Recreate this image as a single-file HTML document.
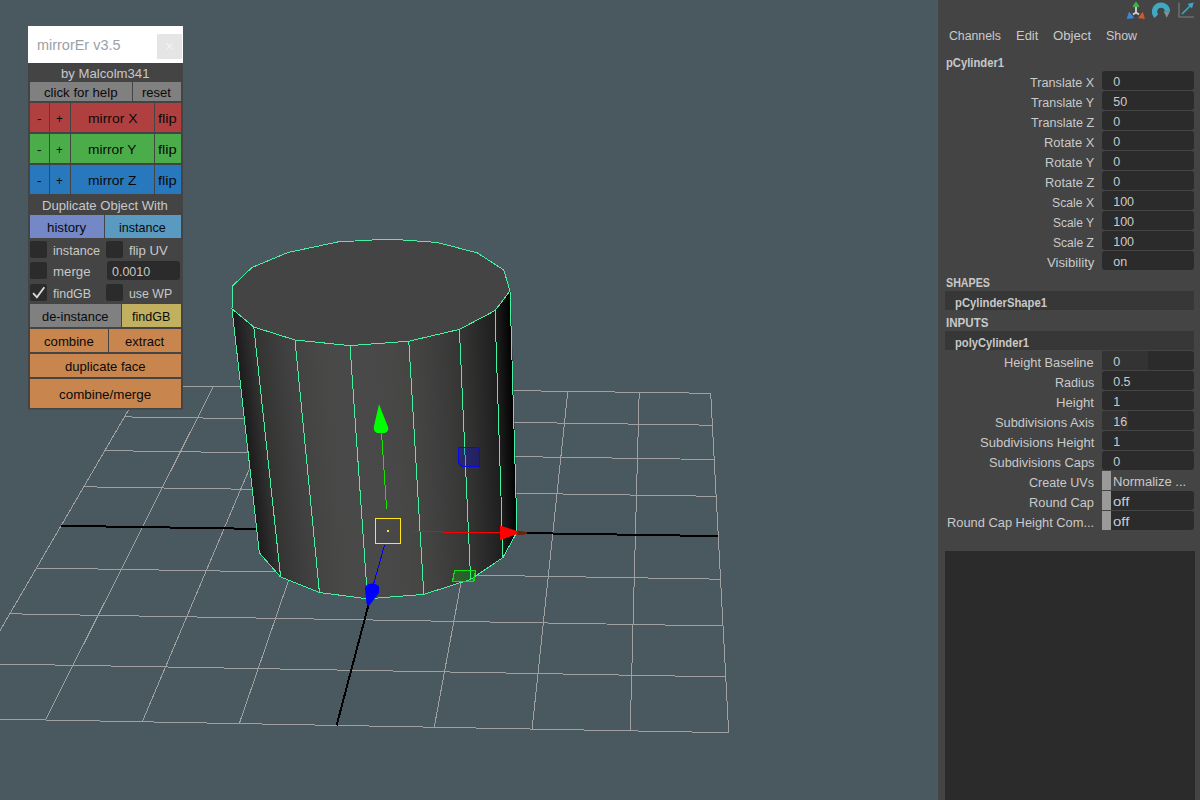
<!DOCTYPE html>
<html><head><meta charset="utf-8"><title>mirrorEr</title><style>
html,body{margin:0;padding:0}
body{width:1200px;height:800px;overflow:hidden;background:#4a5860;position:relative;font-family:"Liberation Sans",sans-serif;font-size:13px}
.a,.t{position:absolute;white-space:nowrap}
.t{line-height:20px;transform-origin:0 50%}
</style></head><body>
<svg id="vp" width="938" height="800" viewBox="0 0 938 800" style="position:absolute;left:0;top:0">
<path d="M142.7,385.6 L-51.0,718.2 M142.7,385.6 L710.7,393.3 M213.2,386.5 L45.5,720.0 M124.4,416.9 L712.4,425.2 M283.8,387.5 L142.3,721.8 M104.9,450.6 L714.2,459.5 M354.6,388.4 L239.3,723.6 M83.8,486.8 L716.2,496.3 M496.6,390.4 L434.2,727.2 M36.5,568.0 L720.5,579.2 M567.8,391.4 L532.1,729.1 M9.8,613.8 L723.0,626.0 M639.2,392.3 L630.2,730.9 M-19.2,663.7 L725.7,676.9 M710.7,393.3 L728.7,732.7 M-51.0,718.2 L728.7,732.7" stroke="#a0a0a0" stroke-width="1" fill="none" shape-rendering="crispEdges"/>
<path d="M61.1,525.8 L718.3,536.1" stroke="#000" stroke-width="2" fill="none" shape-rendering="crispEdges"/>
<path d="M425.5,389.4 L336.6,725.4" stroke="#000" stroke-width="2" fill="none" shape-rendering="crispEdges"/>
<defs><linearGradient id="f15" gradientUnits="userSpaceOnUse" x1="245.7" y1="430.9" x2="264.6" y2="428.8"><stop offset="0" stop-color="#1b1b1b"/><stop offset="0.25" stop-color="#212121"/><stop offset="0.5" stop-color="#272727"/><stop offset="0.75" stop-color="#2e2d2d"/><stop offset="1" stop-color="#333332"/></linearGradient><linearGradient id="f14" gradientUnits="userSpaceOnUse" x1="267.2" y1="452.0" x2="305.3" y2="448.1"><stop offset="0" stop-color="#333332"/><stop offset="0.25" stop-color="#383837"/><stop offset="0.5" stop-color="#3d3c3c"/><stop offset="0.75" stop-color="#414040"/><stop offset="1" stop-color="#444343"/></linearGradient><linearGradient id="f13" gradientUnits="userSpaceOnUse" x1="307.2" y1="466.2" x2="357.9" y2="462.0"><stop offset="0" stop-color="#444343"/><stop offset="0.25" stop-color="#464645"/><stop offset="0.5" stop-color="#484847"/><stop offset="0.75" stop-color="#4a4949"/><stop offset="1" stop-color="#4a4949"/></linearGradient><linearGradient id="f12" gradientUnits="userSpaceOnUse" x1="358.8" y1="472.2" x2="416.3" y2="468.5"><stop offset="0" stop-color="#4a4949"/><stop offset="0.25" stop-color="#4a4949"/><stop offset="0.5" stop-color="#494848"/><stop offset="0.75" stop-color="#474746"/><stop offset="1" stop-color="#454544"/></linearGradient><linearGradient id="f11" gradientUnits="userSpaceOnUse" x1="416.2" y1="467.8" x2="465.6" y2="465.3"><stop offset="0" stop-color="#454544"/><stop offset="0.25" stop-color="#424241"/><stop offset="0.5" stop-color="#3f3e3e"/><stop offset="0.75" stop-color="#3a3a39"/><stop offset="1" stop-color="#363535"/></linearGradient><linearGradient id="f10" gradientUnits="userSpaceOnUse" x1="465.0" y1="454.4" x2="499.7" y2="453.1"><stop offset="0" stop-color="#363535"/><stop offset="0.25" stop-color="#30302f"/><stop offset="0.5" stop-color="#2b2a2a"/><stop offset="0.75" stop-color="#242424"/><stop offset="1" stop-color="#1e1e1e"/></linearGradient><linearGradient id="f9" gradientUnits="userSpaceOnUse" x1="499.0" y1="434.1" x2="514.2" y2="433.6"><stop offset="0" stop-color="#1e1e1e"/><stop offset="0.25" stop-color="#171717"/><stop offset="0.5" stop-color="#101010"/><stop offset="0.75" stop-color="#090909"/><stop offset="1" stop-color="#020202"/></linearGradient></defs>
<polygon points="232.5,286.0 232.0,308.8 233.5,320.0" fill="#171717"/>
<polygon points="232.0,308.8 253.8,327.0 280.6,577.0 259.4,553.0" fill="url(#f15)" stroke="url(#f15)" stroke-width="0.6"/>
<polygon points="253.8,327.0 295.0,340.0 319.4,592.5 280.6,577.0" fill="url(#f14)" stroke="url(#f14)" stroke-width="0.6"/>
<polygon points="295.0,340.0 350.0,345.6 367.5,598.8 319.4,592.5" fill="url(#f13)" stroke="url(#f13)" stroke-width="0.6"/>
<polygon points="350.0,345.6 408.8,341.2 423.8,594.4 367.5,598.8" fill="url(#f12)" stroke="url(#f12)" stroke-width="0.6"/>
<polygon points="408.8,341.2 459.4,329.4 470.6,579.4 423.8,594.4" fill="url(#f11)" stroke="url(#f11)" stroke-width="0.6"/>
<polygon points="459.4,329.4 495.0,310.6 503.0,557.5 470.6,579.4" fill="url(#f10)" stroke="url(#f10)" stroke-width="0.6"/>
<polygon points="495.0,310.6 510.0,291.0 517.0,532.0 503.0,557.5" fill="url(#f9)" stroke="url(#f9)" stroke-width="0.6"/>
<polygon points="232.5,286.0 252.0,267.5 288.0,252.5 337.5,242.0 389.0,239.0 437.5,242.5 477.5,253.0 503.8,270.0 510.0,291.0 495.0,310.6 459.4,329.4 408.8,341.2 350.0,345.6 295.0,340.0 253.8,327.0 232.0,308.8" fill="#444444"/>
<path d="M232.5,286.0 L252.0,267.5 L288.0,252.5 L337.5,242.0 L389.0,239.0 L437.5,242.5 L477.5,253.0 L503.8,270.0 L510.0,291.0 L495.0,310.6 L459.4,329.4 L408.8,341.2 L350.0,345.6 L295.0,340.0 L253.8,327.0 L232.0,308.8 Z M510.0,291.0 L517.0,532.0 M495.0,310.6 L503.0,557.5 M459.4,329.4 L470.6,579.4 M408.8,341.2 L423.8,594.4 M350.0,345.6 L367.5,598.8 M295.0,340.0 L319.4,592.5 M253.8,327.0 L280.6,577.0 M232.0,308.8 L259.4,553.0 M517.0,532.0 L503.0,557.5 L470.6,579.4 L423.8,594.4 L367.5,598.8 L319.4,592.5 L280.6,577.0 L259.4,553.0" stroke="#46f2a2" stroke-width="1" fill="none" shape-rendering="crispEdges"/>
<path d="M381.5,432 L386.6,508.6" stroke="#1ee000" stroke-width="1" shape-rendering="crispEdges"/>
<path d="M379,404.3 L388.2,427.5 Q388.8,431.5 385,433 L377,433 Q373.4,431.5 373.8,427 Z" fill="#00ff00"/>
<path d="M413,531.7 L500,532.6" stroke="#ff0000" stroke-width="1" shape-rendering="crispEdges"/>
<path d="M500,525.6 L500,540.2 L518.5,533.4 L518.5,531.4 Z" fill="#ff0000"/>
<path d="M517.5,530.8 L523.5,531.4 L527,532.2 L527,533.8 L523.5,534.8 L517.5,535 Z" fill="#6e2206"/>
<path d="M384.5,545 L373.6,584" stroke="#0000f0" stroke-width="1" shape-rendering="crispEdges"/>
<path d="M365,588 Q365,584 372,583.4 Q379.2,584 379.2,588 L379.2,592.5 L368.6,606.5 L366.6,603.5 L365.4,593 Z" fill="#0000ff"/>
<rect x="375.5" y="518.5" width="25" height="25" fill="none" stroke="#ffe81a" stroke-width="1" shape-rendering="crispEdges"/>
<rect x="387" y="530" width="2" height="2" fill="#ffe81a"/>
<path d="M458.5,447.5 L478.6,447.5 L479.6,452 L479.6,466.4 L462,466.4 L458.6,463 Z" fill="#0000ff" fill-opacity="0.26" stroke="#0808f0" stroke-width="1" shape-rendering="crispEdges"/>
<path d="M454.5,570.5 L475.6,570.5 L473.8,581.4 L452.6,581.4 Z" fill="#00e000" fill-opacity="0.24" stroke="#10e010" stroke-width="1.2" shape-rendering="crispEdges"/>
</svg>
<div class="a" style="left:28px;top:26px;width:155px;height:37px;background:#fff;"></div>
<div class="a" style="left:28px;top:63px;width:155px;height:346px;background:#444;"></div>
<div class="a" style="left:28px;top:409px;width:155px;height:1px;background:#474d52;"></div>
<div class="a" style="left:157px;top:34px;width:25px;height:25px;background:#e5e5e5;"></div>
<span class="t" style="left:164.8px;top:36px;font-size:16px;color:#f1f1f0;line-height:22px">×</span>
<span class="t" style="left:37.00px;top:35.00px;font-size:14px;color:#9aa1a8;transform:scaleX(1.0321);">mirrorEr v3.5</span>
<span class="t" style="left:60.75px;top:64.00px;font-size:13px;color:#c8c8c8;transform:scaleX(1.0122);">by Malcolm341</span>
<div class="a" style="left:30px;top:82px;width:102px;height:19px;background:#808080;"></div>
<span class="t" style="left:44.00px;top:83.00px;font-size:13px;color:#0a0a0a;transform:scaleX(1.0173);">click for help</span>
<div class="a" style="left:133px;top:82px;width:48px;height:19px;background:#808080;"></div>
<span class="t" style="left:142.00px;top:83.00px;font-size:13px;color:#0a0a0a;">reset</span>
<div class="a" style="left:30px;top:103px;width:19px;height:29px;background:#b04040;"></div>
<span class="t" style="left:36.80px;top:109.00px;font-size:13px;color:#0a0a0a;transform:scaleX(1.0394);">-</span>
<div class="a" style="left:50px;top:103px;width:20px;height:29px;background:#b04040;"></div>
<span class="t" style="left:55.75px;top:109.00px;font-size:13px;color:#0a0a0a;transform:scaleX(0.8891);">+</span>
<div class="a" style="left:71px;top:103px;width:83px;height:29px;background:#b04040;"></div>
<span class="t" style="left:87.50px;top:109.00px;font-size:13px;color:#0a0a0a;transform:scaleX(1.0710);">mirror X</span>
<div class="a" style="left:155px;top:103px;width:26px;height:29px;background:#b04040;"></div>
<span class="t" style="left:158.25px;top:109.00px;font-size:13px;color:#0a0a0a;transform:scaleX(1.1282);">flip</span>
<div class="a" style="left:30px;top:134px;width:19px;height:29px;background:#4aad4a;"></div>
<span class="t" style="left:36.80px;top:140.00px;font-size:13px;color:#0a0a0a;transform:scaleX(1.0394);">-</span>
<div class="a" style="left:50px;top:134px;width:20px;height:29px;background:#4aad4a;"></div>
<span class="t" style="left:55.75px;top:140.00px;font-size:13px;color:#0a0a0a;transform:scaleX(0.8891);">+</span>
<div class="a" style="left:71px;top:134px;width:83px;height:29px;background:#4aad4a;"></div>
<span class="t" style="left:87.50px;top:140.00px;font-size:13px;color:#0a0a0a;transform:scaleX(1.0547);">mirror Y</span>
<div class="a" style="left:155px;top:134px;width:26px;height:29px;background:#4aad4a;"></div>
<span class="t" style="left:158.25px;top:140.00px;font-size:13px;color:#0a0a0a;transform:scaleX(1.1282);">flip</span>
<div class="a" style="left:30px;top:165px;width:19px;height:29px;background:#2878be;"></div>
<span class="t" style="left:36.80px;top:171.00px;font-size:13px;color:#0a0a0a;transform:scaleX(1.0394);">-</span>
<div class="a" style="left:50px;top:165px;width:20px;height:29px;background:#2878be;"></div>
<span class="t" style="left:55.75px;top:171.00px;font-size:13px;color:#0a0a0a;transform:scaleX(0.8891);">+</span>
<div class="a" style="left:71px;top:165px;width:83px;height:29px;background:#2878be;"></div>
<span class="t" style="left:87.50px;top:171.00px;font-size:13px;color:#0a0a0a;transform:scaleX(1.0662);">mirror Z</span>
<div class="a" style="left:155px;top:165px;width:26px;height:29px;background:#2878be;"></div>
<span class="t" style="left:158.25px;top:171.00px;font-size:13px;color:#0a0a0a;transform:scaleX(1.1282);">flip</span>
<span class="t" style="left:41.50px;top:196.00px;font-size:13px;color:#c8c8c8;transform:scaleX(1.0073);">Duplicate Object With</span>
<div class="a" style="left:30px;top:215px;width:74px;height:23px;background:#7488c8;"></div>
<span class="t" style="left:46.90px;top:218.00px;font-size:13px;color:#0a0a0a;transform:scaleX(1.0238);">history</span>
<div class="a" style="left:105px;top:215px;width:76px;height:23px;background:#5a9ac0;"></div>
<span class="t" style="left:118.90px;top:218.00px;font-size:13px;color:#0a0a0a;transform:scaleX(0.9645);">instance</span>
<div class="a" style="left:30px;top:241px;width:17px;height:17px;background:#2b2b2b;border-radius:2px"></div>
<span class="t" style="left:52.60px;top:241.00px;font-size:13px;color:#c8c8c8;transform:scaleX(0.9707);">instance</span>
<div class="a" style="left:106px;top:241px;width:17px;height:17px;background:#2b2b2b;border-radius:2px"></div>
<span class="t" style="left:128.50px;top:241.00px;font-size:13px;color:#c8c8c8;transform:scaleX(1.0159);">flip UV</span>
<div class="a" style="left:30px;top:262px;width:17px;height:17px;background:#2b2b2b;border-radius:2px"></div>
<span class="t" style="left:52.90px;top:262.00px;font-size:13px;color:#c8c8c8;transform:scaleX(1.0176);">merge</span>
<div class="a" style="left:107px;top:261px;width:73px;height:19px;background:#2b2b2b;border-radius:3px"></div>
<span class="t" style="left:111.80px;top:262.00px;font-size:13px;color:#c8c8c8;transform:scaleX(0.9607);">0.0010</span>
<div class="a" style="left:30px;top:284px;width:17px;height:17px;background:#2b2b2b;border-radius:2px"></div>
<span class="t" style="left:52.60px;top:284.00px;font-size:13px;color:#c8c8c8;transform:scaleX(0.9561);">findGB</span>
<svg class="a" style="left:30px;top:284px" width="17" height="17" viewBox="0 0 17 17"><path d="M3.1,9.2 L6.9,13.3 L14.3,3.3" stroke="#dadada" stroke-width="1.9" fill="none"/></svg>
<div class="a" style="left:106px;top:284px;width:17px;height:17px;background:#2b2b2b;border-radius:2px"></div>
<span class="t" style="left:128.50px;top:284.00px;font-size:13px;color:#c8c8c8;transform:scaleX(0.9470);">use WP</span>
<div class="a" style="left:30px;top:304px;width:91px;height:23px;background:#808080;"></div>
<span class="t" style="left:42.10px;top:307.00px;font-size:13px;color:#0a0a0a;transform:scaleX(0.9894);">de-instance</span>
<div class="a" style="left:122px;top:304px;width:59px;height:23px;background:#c0b060;"></div>
<span class="t" style="left:131.50px;top:307.00px;font-size:13px;color:#0a0a0a;transform:scaleX(0.9637);">findGB</span>
<div class="a" style="left:30px;top:329px;width:78px;height:23px;background:#c8864e;"></div>
<span class="t" style="left:43.90px;top:332.00px;font-size:13px;color:#0a0a0a;transform:scaleX(1.0114);">combine</span>
<div class="a" style="left:109px;top:329px;width:72px;height:23px;background:#c8864e;"></div>
<span class="t" style="left:124.90px;top:332.00px;font-size:13px;color:#0a0a0a;transform:scaleX(1.0048);">extract</span>
<div class="a" style="left:30px;top:354px;width:151px;height:23px;background:#c8864e;"></div>
<span class="t" style="left:64.90px;top:357.00px;font-size:13px;color:#0a0a0a;transform:scaleX(1.0047);">duplicate face</span>
<div class="a" style="left:30px;top:379px;width:151px;height:29px;background:#c8864e;"></div>
<span class="t" style="left:59.10px;top:385.00px;font-size:13px;color:#0a0a0a;transform:scaleX(1.0290);">combine/merge</span>
<div class="a" style="left:937px;top:0px;width:1px;height:800px;background:#555a5e;"></div>
<div class="a" style="left:938px;top:0px;width:262px;height:800px;background:#444;"></div>
<div class="a" style="left:945px;top:551px;width:250px;height:249px;background:#2b2b2b;"></div>
<span class="t" style="left:948.80px;top:26.00px;font-size:12.5px;color:#cacaca;transform:scaleX(0.9827);">Channels</span>
<span class="t" style="left:1015.70px;top:26.00px;font-size:12.5px;color:#cacaca;transform:scaleX(1.0353);">Edit</span>
<span class="t" style="left:1052.80px;top:26.00px;font-size:12.5px;color:#cacaca;transform:scaleX(1.0546);">Object</span>
<span class="t" style="left:1105.50px;top:26.00px;font-size:12.5px;color:#cacaca;transform:scaleX(0.9946);">Show</span>
<span class="t" style="left:945.70px;top:53.00px;font-size:12px;color:#c8c8c8;font-weight:bold;transform:scaleX(0.9368);">pCylinder1</span>
<div class="a" style="left:1102px;top:71px;width:92px;height:19px;background:#2b2b2b;border-radius:3px"></div>
<span class="t" style="left:1029.75px;top:73.00px;font-size:12.5px;color:#cacaca;transform:scaleX(1.0125);">Translate X</span>
<span class="t" style="left:1113.20px;top:72.00px;font-size:12.5px;color:#cacaca;">0</span>
<div class="a" style="left:1102px;top:91px;width:92px;height:19px;background:#2b2b2b;border-radius:3px"></div>
<span class="t" style="left:1030.90px;top:93.00px;font-size:12.5px;color:#cacaca;">Translate Y</span>
<span class="t" style="left:1113.20px;top:92.00px;font-size:12.5px;color:#cacaca;">50</span>
<div class="a" style="left:1102px;top:111px;width:92px;height:19px;background:#2b2b2b;border-radius:3px"></div>
<span class="t" style="left:1030.90px;top:113.00px;font-size:12.5px;color:#cacaca;transform:scaleX(1.0055);">Translate Z</span>
<span class="t" style="left:1113.20px;top:112.00px;font-size:12.5px;color:#cacaca;">0</span>
<div class="a" style="left:1102px;top:131px;width:92px;height:19px;background:#2b2b2b;border-radius:3px"></div>
<span class="t" style="left:1043.60px;top:133.00px;font-size:12.5px;color:#cacaca;transform:scaleX(1.0362);">Rotate X</span>
<span class="t" style="left:1113.20px;top:132.00px;font-size:12.5px;color:#cacaca;">0</span>
<div class="a" style="left:1102px;top:151px;width:92px;height:19px;background:#2b2b2b;border-radius:3px"></div>
<span class="t" style="left:1044.75px;top:153.00px;font-size:12.5px;color:#cacaca;transform:scaleX(1.0173);">Rotate Y</span>
<span class="t" style="left:1113.20px;top:152.00px;font-size:12.5px;color:#cacaca;">0</span>
<div class="a" style="left:1102px;top:171px;width:92px;height:19px;background:#2b2b2b;border-radius:3px"></div>
<span class="t" style="left:1044.75px;top:173.00px;font-size:12.5px;color:#cacaca;transform:scaleX(1.0274);">Rotate Z</span>
<span class="t" style="left:1113.20px;top:172.00px;font-size:12.5px;color:#cacaca;">0</span>
<div class="a" style="left:1102px;top:191px;width:92px;height:19px;background:#2b2b2b;border-radius:3px"></div>
<span class="t" style="left:1051.90px;top:193.00px;font-size:12.5px;color:#cacaca;transform:scaleX(0.9772);">Scale X</span>
<span class="t" style="left:1113.20px;top:192.00px;font-size:12.5px;color:#cacaca;">100</span>
<div class="a" style="left:1102px;top:211px;width:92px;height:19px;background:#2b2b2b;border-radius:3px"></div>
<span class="t" style="left:1053.00px;top:213.00px;font-size:12.5px;color:#cacaca;transform:scaleX(0.9567);">Scale Y</span>
<span class="t" style="left:1113.20px;top:212.00px;font-size:12.5px;color:#cacaca;">100</span>
<div class="a" style="left:1102px;top:231px;width:92px;height:19px;background:#2b2b2b;border-radius:3px"></div>
<span class="t" style="left:1053.00px;top:233.00px;font-size:12.5px;color:#cacaca;transform:scaleX(0.9675);">Scale Z</span>
<span class="t" style="left:1113.20px;top:232.00px;font-size:12.5px;color:#cacaca;">100</span>
<div class="a" style="left:1102px;top:251px;width:92px;height:19px;background:#2b2b2b;border-radius:3px"></div>
<span class="t" style="left:1046.60px;top:253.00px;font-size:12.5px;color:#cacaca;transform:scaleX(1.0551);">Visibility</span>
<span class="t" style="left:1113.20px;top:252.00px;font-size:12.5px;color:#cacaca;">on</span>
<span class="t" style="left:945.50px;top:273.00px;font-size:12px;color:#c8c8c8;font-weight:bold;transform:scaleX(0.8916);">SHAPES</span>
<div class="a" style="left:945px;top:291px;width:249px;height:19px;background:#373737;"></div>
<span class="t" style="left:954.50px;top:293.00px;font-size:12px;color:#c8c8c8;font-weight:bold;transform:scaleX(0.9385);">pCylinderShape1</span>
<span class="t" style="left:946.00px;top:313.00px;font-size:12px;color:#c8c8c8;font-weight:bold;transform:scaleX(0.9658);">INPUTS</span>
<div class="a" style="left:945px;top:331px;width:249px;height:19px;background:#373737;"></div>
<span class="t" style="left:954.50px;top:333.00px;font-size:12px;color:#c8c8c8;font-weight:bold;transform:scaleX(0.9325);">polyCylinder1</span>
<div class="a" style="left:1102px;top:351px;width:92px;height:19px;background:#2b2b2b;border-radius:3px"></div>
<div class="a" style="left:1102px;top:351px;width:46px;height:19px;background:#333;border-radius:3px 0 0 3px"></div>
<span class="t" style="left:1004.40px;top:353.00px;font-size:12.5px;color:#cacaca;transform:scaleX(1.0233);">Height Baseline</span>
<span class="t" style="left:1113.20px;top:352.00px;font-size:12.5px;color:#cacaca;">0</span>
<div class="a" style="left:1102px;top:371px;width:92px;height:19px;background:#2b2b2b;border-radius:3px"></div>
<span class="t" style="left:1054.80px;top:373.00px;font-size:12.5px;color:#cacaca;transform:scaleX(1.0074);">Radius</span>
<span class="t" style="left:1113.20px;top:372.00px;font-size:12.5px;color:#cacaca;">0.5</span>
<div class="a" style="left:1102px;top:391px;width:92px;height:19px;background:#2b2b2b;border-radius:3px"></div>
<span class="t" style="left:1056.00px;top:393.00px;font-size:12.5px;color:#cacaca;transform:scaleX(1.0516);">Height</span>
<span class="t" style="left:1113.20px;top:392.00px;font-size:12.5px;color:#cacaca;">1</span>
<div class="a" style="left:1102px;top:411px;width:92px;height:19px;background:#2b2b2b;border-radius:3px"></div>
<div class="a" style="left:1102px;top:411px;width:26px;height:19px;background:#333;border-radius:3px 0 0 3px"></div>
<span class="t" style="left:994.80px;top:413.00px;font-size:12.5px;color:#cacaca;transform:scaleX(1.0271);">Subdivisions Axis</span>
<span class="t" style="left:1113.20px;top:412.00px;font-size:12.5px;color:#cacaca;">16</span>
<div class="a" style="left:1102px;top:431px;width:92px;height:19px;background:#2b2b2b;border-radius:3px"></div>
<span class="t" style="left:979.50px;top:433.00px;font-size:12.5px;color:#cacaca;transform:scaleX(1.0429);">Subdivisions Height</span>
<span class="t" style="left:1113.20px;top:432.00px;font-size:12.5px;color:#cacaca;">1</span>
<div class="a" style="left:1102px;top:451px;width:92px;height:19px;background:#2b2b2b;border-radius:3px"></div>
<span class="t" style="left:988.50px;top:453.00px;font-size:12.5px;color:#cacaca;transform:scaleX(1.0259);">Subdivisions Caps</span>
<span class="t" style="left:1113.20px;top:452.00px;font-size:12.5px;color:#cacaca;">0</span>
<div class="a" style="left:1102px;top:471px;width:9px;height:19px;background:#9a9a9a;"></div>
<span class="t" style="left:1029.00px;top:473.00px;font-size:12.5px;color:#cacaca;transform:scaleX(1.0061);">Create UVs</span>
<span class="t" style="left:1112.70px;top:472.00px;font-size:12.5px;color:#cacaca;transform:scaleX(1.0434);">Normalize ...</span>
<div class="a" style="left:1102px;top:491px;width:92px;height:19px;background:#2b2b2b;border-radius:3px"></div>
<div class="a" style="left:1102px;top:491px;width:9px;height:19px;background:#9a9a9a;"></div>
<span class="t" style="left:1029.00px;top:493.00px;font-size:12.5px;color:#cacaca;transform:scaleX(1.0278);">Round Cap</span>
<span class="t" style="left:1112.70px;top:492.00px;font-size:12.5px;color:#cacaca;transform:scaleX(1.1922);">off</span>
<div class="a" style="left:1102px;top:511px;width:92px;height:19px;background:#2b2b2b;border-radius:3px"></div>
<div class="a" style="left:1102px;top:511px;width:9px;height:19px;background:#9a9a9a;"></div>
<span class="t" style="left:946.80px;top:513.00px;font-size:12.5px;color:#cacaca;transform:scaleX(1.0284);">Round Cap Height Com...</span>
<span class="t" style="left:1112.70px;top:512.00px;font-size:12.5px;color:#cacaca;transform:scaleX(1.1922);">off</span>
<svg class="a" style="left:1120px;top:0" width="80" height="25" viewBox="0 0 80 25">
<path d="M16,2 L19,6.6 L13,6.6 Z" fill="#3fb24a" stroke="#3fb24a" stroke-linejoin="round" stroke-width="1"/>
<path d="M16,7 L16,13 M16,12.6 L13,14.4 M16,12.6 L19,14.4" stroke="#d4d4d4" stroke-width="1.8" fill="none"/>
<path d="M9.3,12.2 L13.6,17.8 L7.2,18.6 Z" fill="#3a86d8" stroke="#3a86d8" stroke-linejoin="round" stroke-width="0.8"/>
<path d="M22.6,12.5 L24.4,18.4 L18.6,17.8 Z" fill="#d8562e" stroke="#d8562e" stroke-linejoin="round" stroke-width="0.8"/>
<path d="M36.4,16.2 A6.5,6.5 0 1 1 47.5,11.2" fill="none" stroke="#3fa9c4" stroke-width="5.2"/>
<path d="M43.6,11.3 L50,11.3 L46.8,17.8 Z" fill="#84919a"/>
<path d="M59,2.5 L59,17 L74,17" stroke="#768280" stroke-width="1.1" fill="none"/>
<path d="M62,14 L70.5,5.5" stroke="#3fa9c4" stroke-width="1.6" fill="none"/>
<path d="M73.6,2.4 L67.6,4 L72,8.4 Z" fill="#3fa9c4"/>
</svg>
</body></html>
